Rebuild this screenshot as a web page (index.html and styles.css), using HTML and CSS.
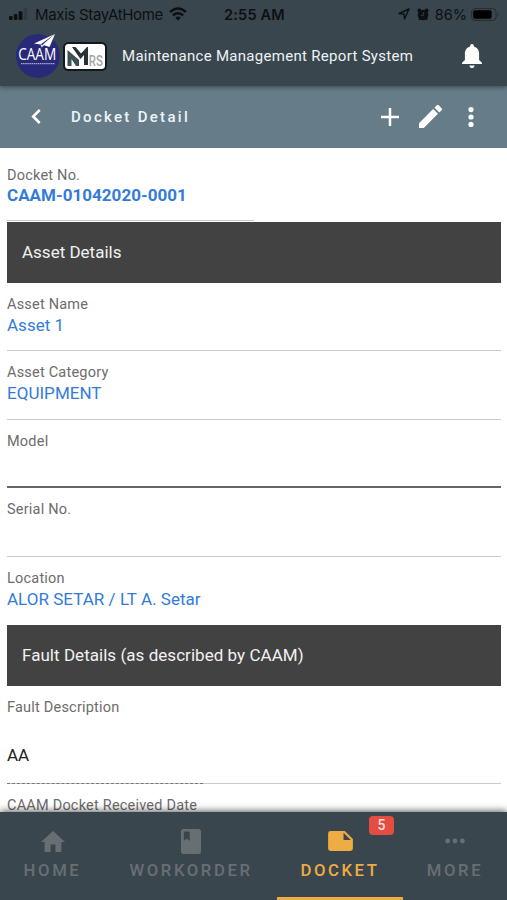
FILE: index.html
```html
<!DOCTYPE html>
<html lang="en">
<head>
<meta charset="utf-8">
<title>Docket Detail</title>
<link rel="stylesheet" href="styles.css">
</head>
<body>
<div class="app">
  <header class="header">
    <div class="status">
      <div class="carrier">
        <svg width="20" height="12" viewBox="0 0 20 12"><rect y="8" width="3.6" height="4" rx="1"/><rect x="4.8" y="6" width="3.6" height="6" rx="1"/><rect x="9.6" y="3.3" width="3.8" height="8.7" rx="1"/><rect x="14.6" width="3.8" height="12" rx="1" opacity=".18"/></svg>
        <span class="carrier-name">Maxis StayAtHome</span>
        <svg width="18" height="14" viewBox="0 0 18 14" fill="none" stroke="#0c1013" stroke-width="2.4"><path class="arc" d="M1 5Q9-2 17 5M3.800 8.300Q9 4 14.200 8.300"/><path d="M6.200 10.700Q9 8.400 11.800 10.700L9 13.500Z" fill="#0c1013" stroke="none"/></svg>
      </div>
      <span class="clock">2:55 AM</span>
      <div class="power">
        <svg width="12" height="12" viewBox="0 0 12 12" fill="none" stroke="#0c1013" stroke-width="1.4" stroke-linejoin="round"><path d="M11 1L1 5.5 6 6 6.5 11Z"/></svg>
        <svg class="alarm" width="12" height="13" viewBox="0 0 12 13"><circle cx="6" cy="7" r="5.300"/><circle cx="2.4" cy="2.6" r="2"/><circle cx="9.6" cy="2.6" r="2"/><path d="M2 12l1-2M10 12l-1-2" stroke="#0c1013" stroke-width="1.5"/><path d="M6.400 4.300V7.400H3.800" fill="none" stroke="#3a464d" stroke-width=".8"/></svg>
        <span class="percent">86%</span>
        <svg width="29" height="13" viewBox="0 0 29 13"><rect x=".6" y=".6" width="24.5" height="11.8" rx="3.4" fill="none" stroke="#242d32"/><rect x="2.2" y="2.2" width="18.5" height="8.6" rx="2" fill="#000"/><path d="M26.5 4.5Q29 6.5 26.5 8.5Z" fill="#242d32"/></svg>
      </div>
    </div>
    <div class="brand">
      <svg class="logo-caam" width="46" height="46" viewBox="0 0 46 46"><circle cx="23" cy="23" r="22" fill="#29297a"/><path d="M40 1L19 10.5 25.5 11.5Z" fill="#fff"/><path d="M40 1L27.5 11.8 34.5 14Z" fill="#fff"/><path d="M25.5 11.5l1 3 2.8-2.2z" fill="#d9dcee"/><text x="3.200" y="27" textLength="38" lengthAdjust="spacingAndGlyphs" class="caam-text">CAAM</text><path d="M6 30.700H40" stroke="#aaaace" stroke-width="1.2" stroke-dasharray="1.5 .6"/></svg>
      <svg class="logo-mrs" width="44" height="29" viewBox="0 0 44 29"><rect x="1" y="1" width="42" height="27" rx="4.5" fill="#fff" stroke="#12191d" stroke-width="2"/><path d="M4.500 24V8L16 18V24H13L8.500 17V24Z" fill="#3b5057"/><path d="M9 5H12.500L18 11.500 24 5H25V23H21V13L17.500 17Z" fill="#273238"/><text x="25.800" y="24" textLength="14" lengthAdjust="spacingAndGlyphs" class="mrs-text">RS</text></svg>
      <h1 class="title">Maintenance Management Report System</h1>
      <svg class="bell" width="20" height="25" viewBox="0 0 20 25" fill="#fff"><path d="M10 0C8.9 0 8.2.8 8.2 1.9V2.5C4.8 3.3 2.9 6.2 2.9 9.7V16L0 18.7V20H20V18.7L17.1 16V9.7C17.1 6.2 15.2 3.3 11.8 2.5V1.9C11.8.8 11.1 0 10 0ZM7.5 21.4C7.5 22.9 8.6 24 10 24S12.500 22.900 12.500 21.400Z"/></svg>
    </div>
  </header>
  <nav class="toolbar">
    <svg class="back" width="10" height="15" viewBox="0 0 10 15" fill="none" stroke="#fff" stroke-width="2.6"><path d="M8.700 1L2.200 7.500 8.700 14"/></svg>
    <h2 class="page-title">Docket Detail</h2>
    <svg class="add" width="18" height="18" viewBox="0 0 18 18" stroke="#fff" stroke-width="2.5"><path d="M9 0V18M0 9H18"/></svg>
    <svg class="edit" width="23" height="23" viewBox="3 3 18 18" fill="#fff"><path d="M3 17.250V21h3.750L17.810 9.940l-3.750-3.750L3 17.250zM20.710 7.040c.39-.39.39-1.020 0-1.410l-2.340-2.340c-.39-.39-1.020-.39-1.410 0l-1.830 1.830 3.750 3.750 1.830-1.830z"/></svg>
    <svg class="dots" width="6" height="20" viewBox="0 0 6 20" fill="#fff"><circle cx="3" cy="2.600" r="2.600"/><circle cx="3" cy="10" r="2.600"/><circle cx="3" cy="17.400" r="2.600"/></svg>
  </nav>
  <main class="content">
    <div class="field docket-no"><div class="label">Docket No.</div><div class="value strong">CAAM-01042020-0001</div></div>
    <h3 class="section">Asset Details</h3>
    <div class="field"><div class="label">Asset Name</div><div class="value">Asset 1</div></div>
    <div class="field"><div class="label">Asset Category</div><div class="value">EQUIPMENT</div></div>
    <div class="field dark-line"><div class="label">Model</div></div>
    <div class="field"><div class="label">Serial No.</div></div>
    <div class="field no-line"><div class="label">Location</div><div class="value">ALOR SETAR / LT A. Setar</div></div>
    <h3 class="section fault-title">Fault Details (as described by CAAM)</h3>
    <div class="field fault"><div class="label">Fault Description</div><div class="value plain">AA</div></div>
    <div class="field no-line"><div class="label">CAAM Docket Received Date</div></div>
  </main>
  <footer class="tabs">
    <div class="tab home"><svg width="24" height="21" viewBox="2 3 20 17" preserveAspectRatio="none"><path d="M10 20v-6h4v6h5v-8h3L12 3 2 12h3v8z"/></svg><span>HOME</span></div>
    <div class="tab work"><svg width="20" height="25" viewBox="4 2 16 20"><path fill-rule="evenodd" d="M18 2H6c-1.100 0-2 .9-2 2v16c0 1.100.9 2 2 2h12c1.100 0 2-.9 2-2V4c0-1.100-.9-2-2-2zM6.200 4H11v7.400l-2.400-1.700-2.400 1.700z"/></svg><span>WORKORDER</span></div>
    <div class="tab docket"><svg width="25" height="20" viewBox="0 0 26 21"><path fill-rule="evenodd" d="M2.500 0H17.500L26 8.500V18.500Q26 21 23.500 21H2.500Q0 21 0 18.500V2.500Q0 0 2.500 0ZM16.200 1.800V9.400H23.800Z"/></svg><span>DOCKET</span><b class="badge">5</b></div>
    <div class="tab more"><svg width="20" height="6" viewBox="0 0 20 6"><circle cx="2.600" cy="3" r="2.400"/><circle cx="10" cy="3" r="2.400"/><circle cx="17.400" cy="3" r="2.400"/></svg><span>MORE</span></div>
  </footer>
</div>
</body>
</html>
```
FILE: styles.css
```css
* { box-sizing: border-box; }
body { margin: 0; font-family: Roboto, sans-serif; background: #fff; }
h1, h2, h3 { margin: 0; font-weight: 400; }
svg { display: block; flex: none; overflow: visible; }
.app { width: 507px; height: 900px; display: flex; flex-direction: column; overflow: hidden; }
.header { height: 86px; flex: none; background: #3a464d; position: relative; z-index: 2; box-shadow: 0 1px 5px rgba(0,0,0,.45); }
.status { height: 28px; display: grid; grid-template-columns: 1fr auto 1fr; align-items: center; padding: 0 7px 0 9px; color: #0c1013; font: 500 15px Inter, sans-serif; }
.carrier, .power { display: flex; align-items: center; }
.carrier-name { margin: 0 6px; font-size: 15px; font-weight: 400; letter-spacing: -.32px; white-space: nowrap; }
.carrier svg { fill: #0c1013; }
.carrier .arc { fill: none; }
.clock { font-weight: 600; font-size: 14.5px; letter-spacing: .2px; }
.power { justify-content: flex-end; }
.alarm { margin: 0 6px 0 7px; fill: #0c1013; }
.percent { font-size: 14.5px; font-weight: 400; margin-right: 4px; }
.brand { display: flex; align-items: center; height: 56px; padding: 0 25px 0 15px; }
.logo-mrs { margin-left: 2px; }
.caam-text { font: 400 16px "Open Sans", sans-serif; fill: #fff; }
.mrs-text { font: 500 15px Roboto, sans-serif; fill: #a3a5a7; }
.title { margin-left: 15px; color: #edf2f5; font-size: 15px; letter-spacing: .3px; line-height: 24px; white-space: nowrap; }
.bell { margin-left: auto; }
.toolbar { height: 62px; flex: none; display: flex; align-items: center; padding: 0 33px 1px 31px; background: #667c88; }
.page-title { margin: 0 auto 0 30px; color: #edf5fa; font-size: 15px; font-weight: 500; letter-spacing: 2.3px; }
.edit { margin: 0 26px 0 20px; }
.content { flex: 1; min-height: 0; overflow: hidden; padding: 6px 6px 0 7px; }
.field { height: 68.4px; padding-top: 13px; border-bottom: 1px solid #c8cacb; }
.field.docket-no { height: 68px; padding-top: 12px; border-bottom: 0; }
.docket-no::after { content: ""; display: block; width: 247px; height: 1px; margin-top: 14px; background: #c8cacb; }
.field.no-line { border-bottom: 0; }
.field.dark-line { border-bottom: 2px solid #666; }
.field.fault { height: 98px; }
.fault::after { content: ""; display: block; width: 196px; margin-top: 17px; border-top: 1px dashed #777; }
.label { color: #6c6c6c; font-size: 14.5px; line-height: 18px; letter-spacing: .21px; }
.docket-no .label { position: relative; top: 1px; }
.value { margin-top: 0; color: #347bd9; font-size: 17px; line-height: 22px; letter-spacing: .03px; }
.value.strong { font-weight: 700; margin-bottom: 1px; }
.value.plain { margin-top: 27px; color: #222; }
.section { height: 61px; padding-left: 15px; background: #424242; color: #f1f1f1; font-size: 17px; line-height: 61px; }
.fault-title { letter-spacing: .04px; }
.tabs { height: 88px; flex: none; display: flex; background: #3a464d; position: relative; z-index: 2; box-shadow: 0 -1px 7px rgba(0,0,0,.65); }
.tab { height: 88px; position: relative; display: grid; grid-template-rows: 58px 1fr; justify-items: center; align-items: center; color: #686f73; fill: currentColor; font-size: 16.7px; font-weight: 500; letter-spacing: 2.6px; }
.tab span { align-self: start; line-height: 20px; margin-top: -9.5px; padding-left: 0; }
.home { width: 105px; }
.work { width: 172px; }
.docket { width: 126px; color: #efac43; border-bottom: 3px solid #efac43; }
.more { width: 104px; }
.badge { position: absolute; left: 92px; top: 4px; width: 25px; height: 19px; border-radius: 4px; background: #e54d42; color: #ffdeda; font-size: 14px; font-weight: 500; line-height: 19px; letter-spacing: 0; text-align: center; }
```
